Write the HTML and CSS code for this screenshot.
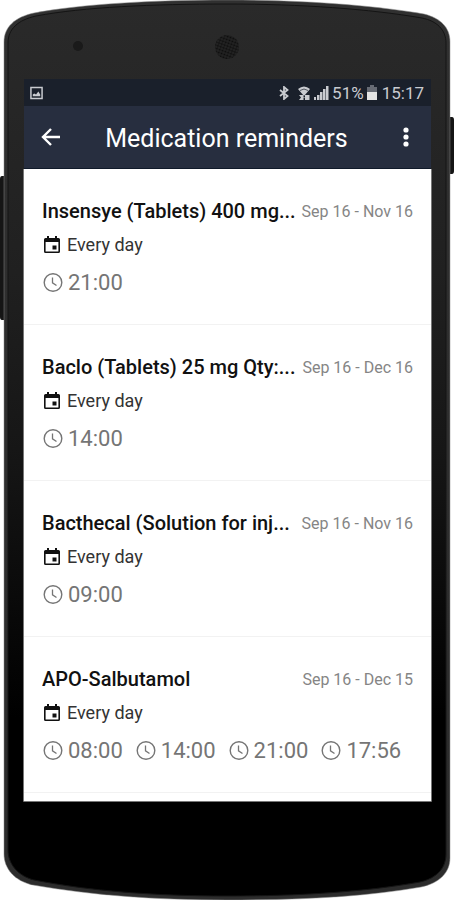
FILE: index.html
```html
<!DOCTYPE html>
<html lang="en">
<head>
<meta charset="utf-8">
<meta name="viewport" content="width=device-width, initial-scale=1">
<title>Medication reminders</title>
<link rel="stylesheet" href="styles.css">
</head>
<body>
<svg class="defs" aria-hidden="true">
  <symbol id="calendar" viewBox="0 0 18 18">
    <path fill-rule="evenodd" d="M4 0h2v2h6V0h2v2h1.500q1.500 0 1.500 1.500v12q0 1.500-1.500 1.500h-13Q1 17 1 15.500v-12Q1 2 2.500 2H4zM2.600 6v9.400h12.800V6z"/>
    <path d="M9.500 9.500h4v4h-4z"/>
  </symbol>
  <symbol id="clock" viewBox="0 0 20 20">
    <circle cx="10" cy="9.500" r="8.800" fill="none" stroke="currentColor" stroke-width="1.400"/>
    <path d="M9.500 4.500v5.300l4 2.700" fill="none" stroke="currentColor" stroke-width="1.300"/>
  </symbol>
</svg>
<div class="phone">
  <svg class="case" viewBox="0 0 454 900" preserveAspectRatio="none" aria-hidden="true">
    <defs>
      <linearGradient id="face" x1="0" y1="0" x2="0" y2="1">
        <stop offset="0" stop-color="#2a2a2a"/><stop offset=".3" stop-color="#202020"/><stop offset=".5" stop-color="#161616"/><stop offset=".8" stop-color="#000"/>
      </linearGradient>
      <linearGradient id="rim" x1="0" y1="0" x2="0" y2="1">
        <stop offset="0" stop-color="#303030"/><stop offset="1" stop-color="#2c2c2c"/>
      </linearGradient>
      <pattern id="mesh" width="3" height="3" patternUnits="userSpaceOnUse" patternTransform="rotate(20)"><rect width="3" height="3" fill="#242424"/><circle cx="1.500" cy="1.500" r="1.100" fill="#0c0c0c"/></pattern>
    </defs>
    <path d="M5 176H2q-2 0-2 3v138q0 3 2 3h3zM449 117h3q2 0 2 3v51q0 3-2 3h-3z" fill="#151515"/>
    <path d="M4 42C4 27 15 17 34 13C82 4 152 0 227 0S372 5 424 14C440 18 450 27 450 42V858C450 872 440 883 421 887C364 897 300 900 227 900S90 895 33 885C14 881 4 868 4 854Z" fill="url(#rim)" stroke="#888" stroke-width=".5"/>
    <path d="M8 43C8 29 18 20 36 16C84 7 153 4 227 4S370 9 422 18C437 21 446 30 446 43V854C446 868 437 878 420 882C364 892 300 896 227 896S90 891 34 880C18 876 8 864 8 850Z" fill="url(#face)" stroke="#141414"/>
    <circle cx="78" cy="46" r="5" fill="#1a1a1a"/>
    <circle cx="227" cy="47" r="12" fill="url(#mesh)"/>
    <path d="M23.500 169V801.500H431.500V169" fill="none" stroke="#777"/>
  </svg>
  <main class="screen">
    <div class="status">
      <svg class="shot" viewBox="0 0 14 14" role="img" aria-label="Screenshot saved"><path d="M1 1h12v12H1z" fill="none" stroke="currentColor" stroke-width="1.600"/><path d="M3 10.500V8.500l1.500-1 2 1 2.500-3 2 3v2z" fill="currentColor"/></svg>
      <div class="indicators">
        <svg class="bluetooth" viewBox="0 0 10 14" role="img" aria-label="Bluetooth"><path d="M1 4l7.500 6L5 13V1l3.500 3L1 10" fill="none" stroke="currentColor" stroke-width="1.800"/></svg>
        <svg class="wifi" viewBox="0 0 14 14" role="img" aria-label="Wi-Fi"><path d="M1 3Q7-2 13 3L7.500 9.500h-1z" fill="currentColor"/><path d="M3 4.500Q7 1.500 11 4.500" fill="none" stroke="#1a202b" stroke-width=".7"/><path d="M2 9h4.500v2.500H8V9h4.500v5H8v-2H6.500v2H2l2-2.500z" fill="currentColor"/></svg>
        <svg class="signal" viewBox="0 0 15 15" role="img" aria-label="Signal"><path d="M0 12h2v3H0zM3 10h2.500v5H3zM6 7h2.500v8H6zM9 4h2.500v11H9zM12 1h2.500v14H12z" fill="currentColor"/></svg>
        <span>51%</span>
        <svg class="battery" viewBox="0 0 10 15" role="img" aria-label="Battery"><path d="M3 0h4v2h3v5H0V2h3z" fill="#676b74"/><path d="M0 7h10v8H0z" fill="#e4e4e4"/></svg>
        <time class="now">15:17</time>
      </div>
    </div>
    <header class="bar">
      <button class="icon-button" aria-label="Back"><svg viewBox="0 0 20 20"><path d="M19 10H2M10 2L2 10l8 8" fill="none" stroke="currentColor" stroke-width="2.400"/></svg></button>
      <h1>Medication reminders</h1>
      <button class="icon-button" aria-label="More options"><svg viewBox="0 0 20 20"><g fill="currentColor"><circle cx="10" cy="3" r="2.600"/><circle cx="10" cy="10" r="2.600"/><circle cx="10" cy="17" r="2.600"/></g></svg></button>
    </header>
    <ul class="list">
      <li class="item">
        <div class="head"><h2>Insensye (Tablets) 400 mg...</h2><span class="dates">Sep 16 - Nov 16</span></div>
        <div class="repeat"><svg><use href="#calendar"/></svg>Every day</div>
        <div class="times"><time><svg><use href="#clock"/></svg>21:00</time></div>
      </li>
      <li class="item">
        <div class="head"><h2>Baclo (Tablets) 25 mg Qty:...</h2><span class="dates">Sep 16 - Dec 16</span></div>
        <div class="repeat"><svg><use href="#calendar"/></svg>Every day</div>
        <div class="times"><time><svg><use href="#clock"/></svg>14:00</time></div>
      </li>
      <li class="item">
        <div class="head"><h2>Bacthecal (Solution for inj...</h2><span class="dates">Sep 16 - Nov 16</span></div>
        <div class="repeat"><svg><use href="#calendar"/></svg>Every day</div>
        <div class="times"><time><svg><use href="#clock"/></svg>09:00</time></div>
      </li>
      <li class="item">
        <div class="head"><h2>APO-Salbutamol</h2><span class="dates">Sep 16 - Dec 15</span></div>
        <div class="repeat"><svg><use href="#calendar"/></svg>Every day</div>
        <div class="times"><time><svg><use href="#clock"/></svg>08:00</time><time><svg><use href="#clock"/></svg>14:00</time><time><svg><use href="#clock"/></svg>21:00</time><time><svg><use href="#clock"/></svg>17:56</time></div>
      </li>
    </ul>
  </main>
</div>
</body>
</html>
```
FILE: styles.css
```css
* { box-sizing: border-box; }
body { margin: 0; background: #fff; font-family: Roboto, "Liberation Sans", sans-serif; }
svg { display: block; flex: none; }
.defs { position: absolute; width: 0; height: 0; }

.phone {
  position: relative;
  display: flex;
  min-height: 100vh;
  padding: 79px 23px 99px 24px;
}
.case { position: absolute; inset: 0; width: 100%; height: 100%; }
.screen {
  position: relative;
  flex: 1;
  min-width: 0;
  background: #fff;
}

.status {
  display: flex;
  align-items: center;
  justify-content: space-between;
  height: 27px;
  padding: 0 7px 0 6px;
  background: #1a202b;
  color: #c9cbd0;
  font-size: 17px;
}
.indicators { display: flex; align-items: center; gap: 3px; }
.shot { width: 13px; height: 14px; }
.bluetooth { width: 10px; height: 14px; margin-right: 5px; }
.wifi { width: 14px; height: 14px; }
.signal { width: 15px; height: 15px; }
.battery { width: 10px; height: 15px; }
.now { margin-left: 2px; }

.bar {
  display: flex;
  align-items: center;
  justify-content: space-between;
  height: 63px;
  padding: 0 10px 0 12px;
  background: #272e3f;
  border-bottom: 1px solid #101a2a;
  color: #fff;
}
.bar h1 { margin: 0; padding: 3px 4px 0 0; font-size: 25px; font-weight: 400; line-height: 32px; white-space: nowrap; }
.icon-button { padding: 5px; border: 0; background: none; color: inherit; }
.icon-button svg { width: 20px; height: 20px; }

.list { margin: 0; padding: 0; list-style: none; }
.item {
  height: 156px;
  padding: 30px 18px 0;
  border-bottom: 1px solid #f2f2f2;
}
.head { display: flex; align-items: center; justify-content: space-between; gap: 4px; }
.head h2 {
  margin: 0;
  min-width: 0;
  overflow: hidden;
  color: #111;
  font-size: 20px;
  font-weight: 500;
  line-height: 24px;
  white-space: nowrap;
}
.dates { flex: none; color: #858585; font-size: 16px; }
.repeat {
  display: flex;
  align-items: center;
  gap: 5px;
  margin-top: 10px;
  color: #333;
  font-size: 18px;
  line-height: 24px;
}
.repeat svg { width: 20px; height: 18px; fill: #111; }
.times { display: flex; gap: 12px; margin-top: 12px; color: #757575; font-size: 22px; line-height: 28px; }
.times time { display: flex; align-items: center; gap: 4px; }
.times svg { width: 22px; height: 20px; }
```
